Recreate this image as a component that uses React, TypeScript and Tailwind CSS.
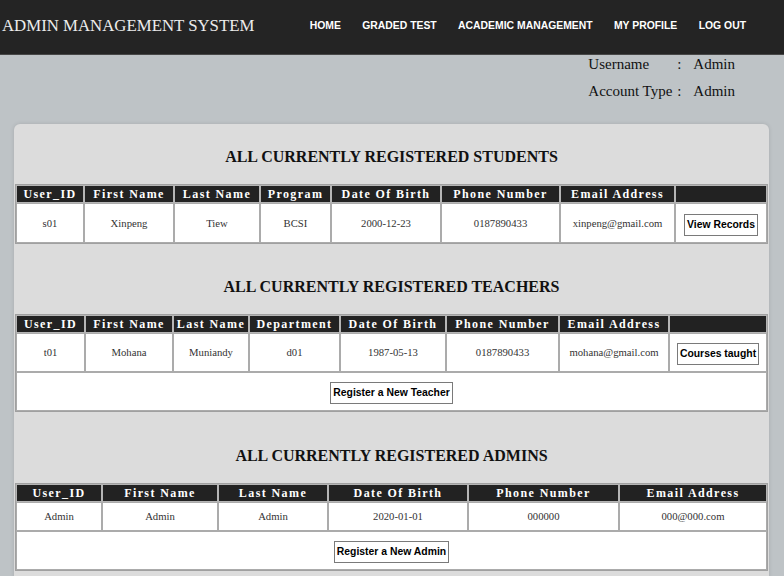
const navLinks = ["HOME", "GRADED TEST", "ACADEMIC MANAGEMENT", "MY PROFILE", "LOG OUT"];

type Section = {
  title: string;
  cols: string[];
  widths: string[];
  row: string[];
  action?: string;
  register?: string;
  rowH: string;
  mt: string;
};

const sections: Section[] = [
  {
    title: "ALL CURRENTLY REGISTERED STUDENTS",
    cols: ["User_ID", "First Name", "Last Name", "Program", "Date Of Birth", "Phone Number", "Email Address", ""],
    widths: ["w-[68px]", "w-[90px]", "w-[86px]", "w-[71px]", "w-[110px]", "w-[119px]", "w-[115px]", "w-[92px]"],
    row: ["s01", "Xinpeng", "Tiew", "BCSI", "2000-12-23", "0187890433", "xinpeng@gmail.com"],
    action: "View Records",
    rowH: "h-[40px]",
    mt: "mt-0",
  },
  {
    title: "ALL CURRENTLY REGISTERED TEACHERS",
    cols: ["User_ID", "First Name", "Last Name", "Department", "Date Of Birth", "Phone Number", "Email Address", ""],
    widths: ["w-[69px]", "w-[88px]", "w-[76px]", "w-[91px]", "w-[106px]", "w-[113px]", "w-[110px]", "w-[98px]"],
    row: ["t01", "Mohana", "Muniandy", "d01", "1987-05-13", "0187890433", "mohana@gmail.com"],
    action: "Courses taught",
    register: "Register a New Teacher",
    rowH: "h-[39px]",
    mt: "mt-[34px]",
  },
  {
    title: "ALL CURRENTLY REGISTERED ADMINS",
    cols: ["User_ID", "First Name", "Last Name", "Date Of Birth", "Phone Number", "Email Address"],
    widths: ["w-[86px]", "w-[116px]", "w-[110px]", "w-[140px]", "w-[151px]", "w-[148px]"],
    row: ["Admin", "Admin", "Admin", "2020-01-01", "000000", "000@000.com"],
    register: "Register a New Admin",
    rowH: "h-[29px]",
    mt: "mt-[35px]",
  },
];

function Btn({ label }: { label: string }) {
  return (
    <button className="h-[22px] px-[2px] border border-[#7a7a7a] bg-white font-['Liberation_Sans',Arial,sans-serif] font-bold text-[10.4px] leading-[12px] text-black">
      {label}
    </button>
  );
}

function RecordTable({ s }: { s: Section }) {
  return (
    <div>
      <h3 className={`${s.mt} mb-[18px] text-center text-[16px] leading-[18px] font-bold text-[#111]`}>{s.title}</h3>
      <table className="w-[753px] table-fixed border-separate border-spacing-0 border border-[#a0a0a0] bg-white">
        <colgroup>
          {s.widths.map((w, i) => (
            <col key={i} className={w} />
          ))}
        </colgroup>
        <thead>
          <tr>
            {s.cols.map((c, i) => (
              <th
                key={i}
                className="h-[18px] p-0 border border-[#b5b5b5] bg-[#222] text-white text-[12px] leading-[14px] font-bold tracking-[1.4px] whitespace-nowrap"
              >
                {c}
              </th>
            ))}
          </tr>
        </thead>
        <tbody>
          <tr>
            {s.row.map((v, i) => (
              <td key={i} className={`${s.rowH} p-0 border border-[#ababab] text-center align-middle text-[10.7px] text-[#333]`}>
                {v}
              </td>
            ))}
            {s.action && (
              <td className={`${s.rowH} p-0 border border-[#ababab] text-center align-middle`}>
                <Btn label={s.action} />
              </td>
            )}
          </tr>
          {s.register && (
            <tr>
              <td colSpan={s.cols.length} className="h-[39px] p-0 border border-[#ababab] text-center align-middle">
                <Btn label={s.register} />
              </td>
            </tr>
          )}
        </tbody>
      </table>
    </div>
  );
}

export default function App() {
  return (
    <div className="min-h-[576px] bg-[#bec3c6] font-['Liberation_Serif','Times_New_Roman',serif]">
      <nav className="h-[55px] bg-[#242424] border-b border-[#474747] flex items-center pb-[2px]">
        <div className="pl-[2px] text-[16.8px] text-[#ececec] whitespace-nowrap">ADMIN MANAGEMENT SYSTEM</div>
        <ul className="ml-auto mr-[27.3px] flex font-['Liberation_Sans',Arial,sans-serif] font-bold text-[10.4px] text-white">
          {navLinks.map((l) => (
            <li key={l} className="px-[10.7px] whitespace-nowrap">
              {l}
            </li>
          ))}
        </ul>
      </nav>

      <div className="flex justify-end pr-[49px]">
        <div className="grid grid-cols-[89px_12px_auto] gap-y-[9px] text-[15px] leading-[18px] text-[#111]">
          <span>Username</span>
          <span>:</span>
          <span className="pl-[4px]">Admin</span>
          <span>Account Type</span>
          <span>:</span>
          <span className="pl-[4px]">Admin</span>
        </div>
      </div>

      <div className="mt-[24px] ml-[14px] mr-[15px] px-[1px] pt-[24px] pb-[20px] rounded-[6px] bg-[#dcdcdc] shadow-[0_0_4px_rgba(0,0,0,0.12)]">
        {sections.map((s) => (
          <RecordTable key={s.title} s={s} />
        ))}
      </div>
    </div>
  );
}
